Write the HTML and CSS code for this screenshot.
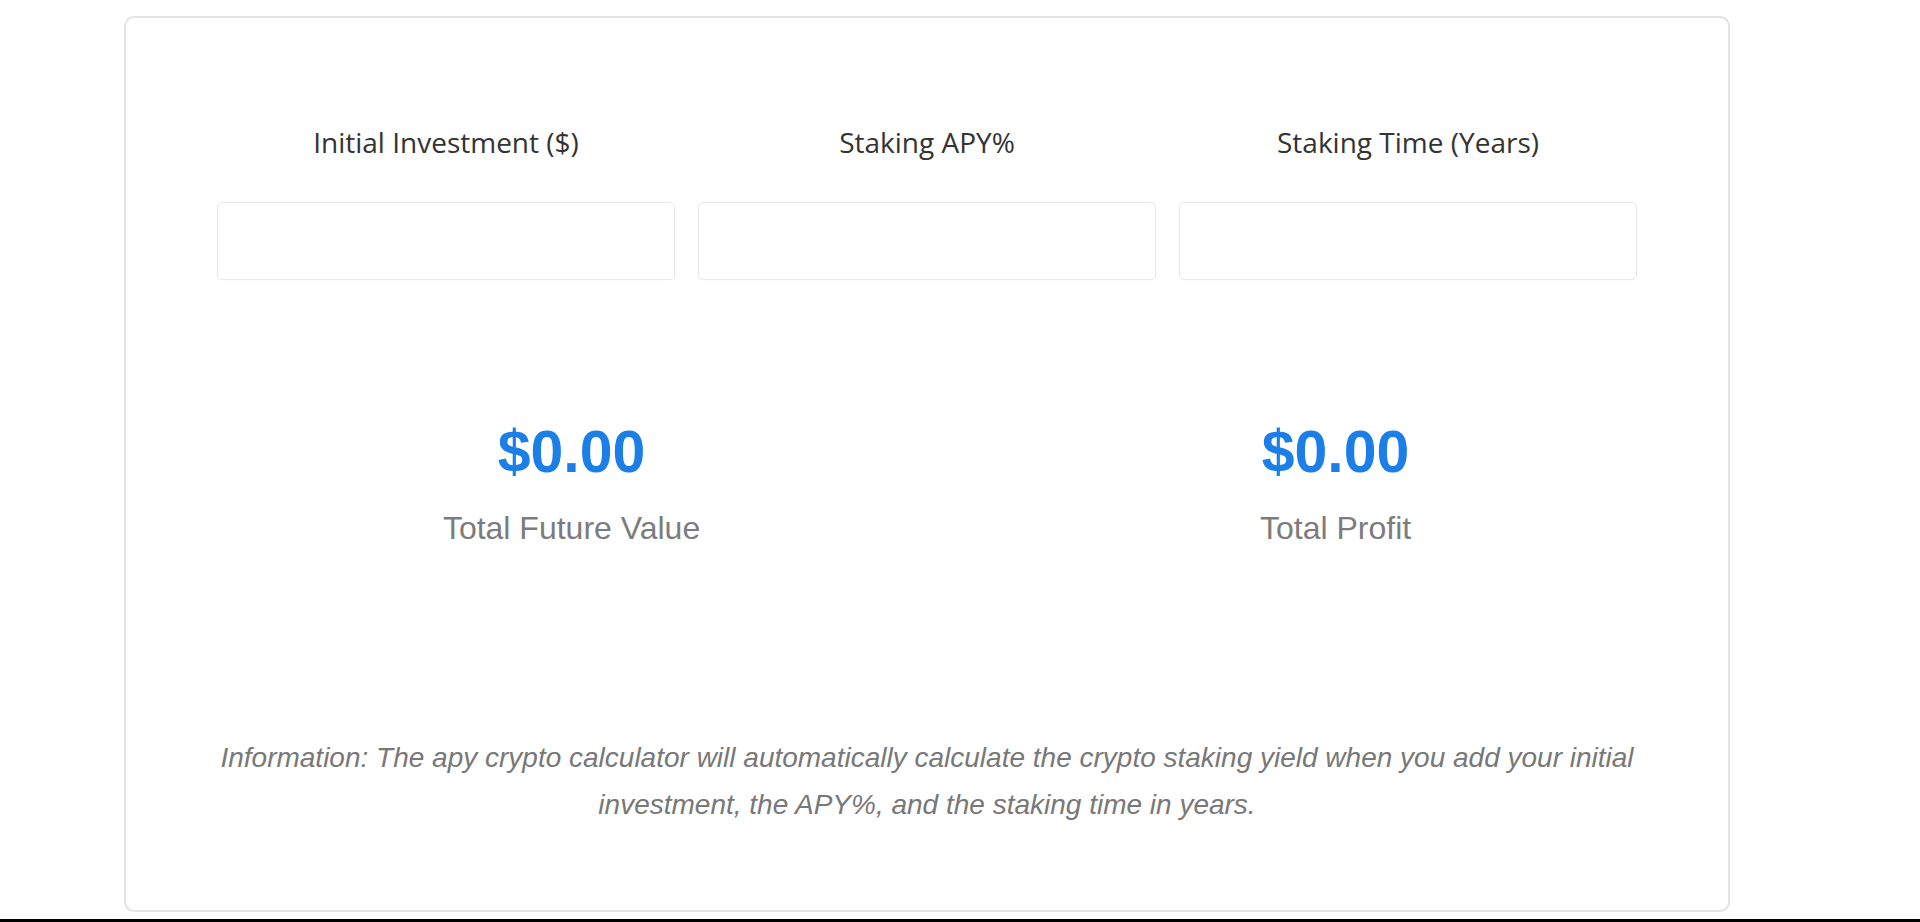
FILE: index.html
```html
<!DOCTYPE html>
<html lang="en">
<head>
    <meta charset="UTF-8">
    <meta name="viewport" content="width=device-width, initial-scale=1.0">
    <title>APY Crypto Calculator</title>
    <link rel="stylesheet" href="styles.css">
</head>
<body>
    <div class="calculator">
        <form class="fields">
            <div class="field">
                <label class="field-label" for="investment">Initial Investment ($)</label>
                <input type="number" id="investment" class="field-input">
            </div>
            <div class="field">
                <label class="field-label" for="apy">Staking APY%</label>
                <input type="number" id="apy" class="field-input">
            </div>
            <div class="field">
                <label class="field-label" for="years">Staking Time (Years)</label>
                <input type="number" id="years" class="field-input">
            </div>
        </form>
        <div class="results">
            <div class="result">
                <div class="result-value">$0.00</div>
                <div class="result-name">Total Future Value</div>
            </div>
            <div class="result">
                <div class="result-value">$0.00</div>
                <div class="result-name">Total Profit</div>
            </div>
        </div>
        <p class="info">Information: The apy crypto calculator will automatically calculate the crypto staking yield when you add your initial investment, the APY%, and the staking time in years.</p>
    </div>
    <div class="bottom-bar"></div>
</body>
</html>
```

FILE: styles.css
```css
body {
    margin: 0;
    background-color: #fff;
    font-family: "Liberation Sans", Arial, sans-serif;
}
.calculator {
    box-sizing: border-box;
    width: 1606px;
    height: 896px;
    margin: 16px 0 0 124px;
    padding: 105px 37px 0;
    border: 2px solid #e3e3e3;
    border-radius: 10px;
    background-color: #fff;
}
.fields {
    display: grid;
    grid-template-columns: repeat(3, 1fr);
    gap: 23px;
    margin: 0 54px;
}
.field {
    display: flex;
    flex-direction: column;
    align-items: center;
}
.field-label {
    font-family: "Open Sans", sans-serif;
    font-size: 28px;
    line-height: 38px;
    color: #333;
    margin-bottom: 41px;
}
.field-input {
    box-sizing: border-box;
    width: 100%;
    height: 78px;
    border: 1px solid #e8e8e8;
    border-radius: 5px;
    background-color: #fff;
    box-shadow: 0 0 2px rgba(0, 0, 0, 0.03);
}
.results {
    display: flex;
    justify-content: space-around;
    margin-top: 139px;
    text-align: center;
}
.result-value {
    font-size: 59px;
    line-height: 66px;
    font-weight: bold;
    color: #1b7fe7;
}
.result-name {
    font-size: 32px;
    line-height: 36px;
    margin-top: 25px;
    color: #7c7c7c;
}
.info {
    margin: 188px 54px 0;
    font-size: 28px;
    line-height: 47px;
    font-style: italic;
    text-align: center;
    color: #787878;
}
.bottom-bar {
    height: 3px;
    margin-top: 7px;
    background-color: #000;
}
```
